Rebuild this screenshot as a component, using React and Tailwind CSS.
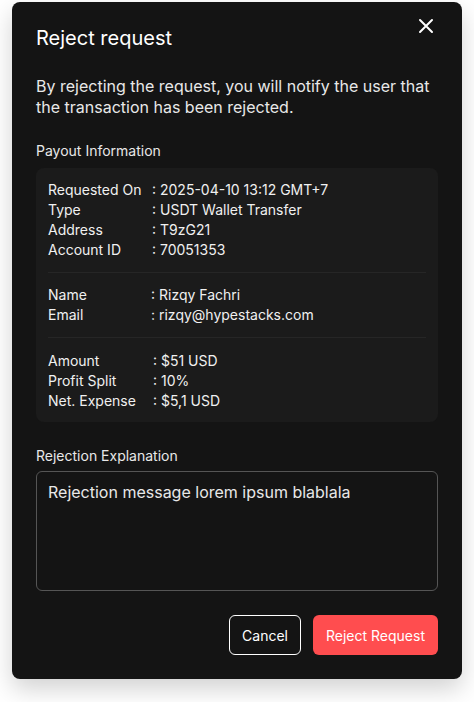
import React from "react";

function Row({ label, value, w }) {
  return (
    <div className="flex h-5 items-center leading-5">
      <span className={w}>{label}</span>
      <span>: {value}</span>
    </div>
  );
}

export default function App() {
  return (
    <div className="min-h-[702px] w-[474px] bg-white pt-[2px] pl-3 font-['Inter',sans-serif]">
      <div className="relative w-[450px] rounded-lg bg-[#141414] px-6 pt-[22px] pb-6 text-white shadow-[0_10px_24px_rgba(0,0,0,0.18)]">
        <button className="absolute right-[26px] top-[14px] flex h-5 w-5 items-center justify-center text-white">
          <svg width="16" height="16" viewBox="0 0 16 16" fill="none" stroke="currentColor" strokeWidth="2" strokeLinecap="round">
            <path d="M2 2L14 14M14 2L2 14" />
          </svg>
        </button>
        <h2 className="text-[20px] leading-7 font-normal text-white">Reject request</h2>
        <p className="mt-6 text-[16px] leading-[20.5px] text-[#e8e8e8]">
          By rejecting the request, you will notify the user that the transaction has been rejected.
        </p>
        <div className="mt-[24px] text-[14px] leading-5 text-[#e8e8e8]">Payout Information</div>
        <div className="mt-[7px] rounded-lg bg-[#1b1b1b] px-3 pt-3 pb-[11px] text-[14px] text-[#f0f0f0]">
          <div>
            <Row w="w-[104px]" label="Requested On" value="2025-04-10 13:12 GMT+7" />
            <Row w="w-[104px]" label="Type" value="USDT Wallet Transfer" />
            <Row w="w-[104px]" label="Address" value="T9zG21" />
            <Row w="w-[104px]" label="Account ID" value="70051353" />
          </div>
          <div className="my-3 h-px bg-[#262626]" />
          <div>
            <Row w="w-[103px]" label="Name" value="Rizqy Fachri" />
            <Row w="w-[103px]" label="Email" value="rizqy@hypestacks.com" />
          </div>
          <div className="mt-3 mb-[13px] h-px bg-[#262626]" />
          <div>
            <Row w="w-[105px]" label="Amount" value="$51 USD" />
            <Row w="w-[105px]" label="Profit Split" value="10%" />
            <Row w="w-[105px]" label="Net. Expense" value="$5,1 USD" />
          </div>
        </div>
        <div className="mt-6 text-[14px] leading-5 text-[#e8e8e8]">Rejection Explanation</div>
        <div className="mt-[5px] h-[120px] rounded-md border border-[#555555] px-[11px] pt-[10px] text-[16px] leading-5 text-[#e8e8e8]">
          Rejection message lorem ipsum blablala
        </div>
        <div className="mt-6 flex justify-end gap-3">
          <button className="h-10 rounded-md border border-white px-3 text-[14px] text-white">Cancel</button>
          <button className="h-10 rounded-md bg-[#ff4d4f] px-[13px] text-[14px] text-white">Reject Request</button>
        </div>
      </div>
    </div>
  );
}
